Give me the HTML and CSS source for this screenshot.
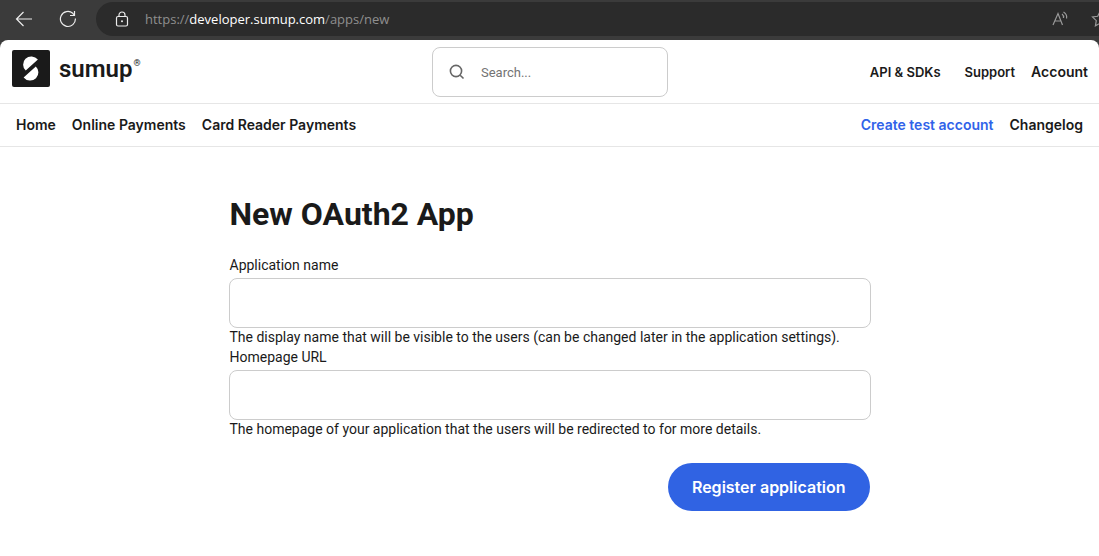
FILE: index.html
```html
<!DOCTYPE html>
<html lang="en">
<head>
<meta charset="utf-8">
<meta name="viewport" content="width=device-width, initial-scale=1">
<title>New OAuth2 App</title>
<link rel="stylesheet" href="styles.css">
</head>
<body>
<div class="browser-bar">
  <button class="tool-button" type="button" aria-label="Back">
    <svg width="18" height="18" viewBox="0 0 18 18"><path d="M17 9H1.5M8.5 2L1.5 9l7 7"/></svg>
  </button>
  <button class="tool-button" type="button" aria-label="Reload">
    <svg width="18" height="18" viewBox="0 0 18 18"><path d="M16.4 8.5a7.5 7.5 0 1 1-2.6-5.2L15.500 5.500M15.500 1v4.500H11"/></svg>
  </button>
  <div class="address-bar">
    <svg class="lock" width="14" height="16" viewBox="0 0 14 16"><rect x="1.500" y="5.500" width="11" height="9.500" rx="1.500"/><path d="M4 5.500V4a3 3 0 0 1 6 0v1.500"/><circle class="dot" cx="7" cy="10.200" r="1"/></svg>
    <span class="url">https://<span class="host">developer.sumup.com</span>/apps/new</span>
    <button class="tool-button dim" type="button" aria-label="Read aloud">
      <svg width="18" height="18" viewBox="0 0 18 18"><path d="M2 15L7 3.500l4.500 11.500M3.700 11h6.300M11 4q2 1.500 1.500 4M12.500 2q4 2.500 3 6.500"/></svg>
    </button>
    <button class="tool-button dim star" type="button" aria-label="Add to favorites">
      <svg width="18" height="18" viewBox="0 0 18 18"><path d="M9 1.500l2.300 4.800 5.200.7-3.800 3.600.9 5.200L9 13.300l-4.600 2.500.9-5.200L1.500 7l5.200-.7z"/></svg>
    </button>
  </div>
</div>
<div class="page">
  <header class="top">
    <a class="logo" href="#" aria-label="SumUp home">
      <svg width="38" height="37" viewBox="0 0 38 37"><rect width="38" height="37" rx="2" fill="#1a1a1a"/><path fill="#fff" d="M13.700 20.400A8 8 0 0 1 13.500 8.800A8.500 8.500 0 0 1 25.900 9.600zM23.800 16.600A8 8 0 0 1 24 28.200A8.500 8.500 0 0 1 11.600 27.400z"/></svg>
      <span class="wordmark">sumup</span><span class="registered">®</span>
    </a>
    <label class="search">
      <svg width="16" height="16" viewBox="0 0 16 16"><circle cx="7" cy="7" r="5.600"/><path d="M11.200 11.200L14.500 14.500"/></svg>
      <input type="search" placeholder="Search..." aria-label="Search">
    </label>
    <nav class="links">
      <a class="medium" href="#">API &amp; SDKs</a>
      <a class="medium" href="#">Support</a>
      <a class="account" href="#">Account</a>
    </nav>
  </header>
  <nav class="subnav">
    <a href="#">Home</a>
    <a href="#">Online Payments</a>
    <a href="#">Card Reader Payments</a>
    <a class="create" href="#">Create test account</a>
    <a href="#">Changelog</a>
  </nav>
  <main class="content">
    <h1>New OAuth2 App</h1>
    <form class="form">
      <label for="app-name">Application name</label>
      <input id="app-name" type="text" aria-describedby="name-help">
      <p id="name-help">The display name that will be visible to the users (can be changed later in the application settings).</p>
      <label for="home-url">Homepage URL</label>
      <input id="home-url" type="url" aria-describedby="url-help">
      <p id="url-help">The homepage of your application that the users will be redirected to for more details.</p>
      <button class="submit" type="button">Register application</button>
    </form>
  </main>
</div>
</body>
</html>
```
FILE: styles.css
```css
* { box-sizing: border-box; }
body {
  margin: 0;
  background: #3b3b3b;
  color: #1a1a1a;
  font: 14px/20px Roboto, sans-serif;
  overflow-x: hidden;
}
a { color: inherit; text-decoration: none; }
button, input { font: inherit; }

.browser-bar {
  display: flex;
  align-items: center;
  gap: 26px;
  height: 40px;
  padding: 0 0 2px 15px;
}
.tool-button {
  display: flex;
  flex: none;
  padding: 0;
  border: 0;
  background: none;
}
.browser-bar svg { flex: none; fill: none; stroke: #ececec; stroke-width: 1.2; }
.browser-bar .dim svg { stroke: #999; }
.browser-bar .dot { fill: #ececec; stroke: none; }
.address-bar {
  display: flex;
  flex: 1;
  align-items: center;
  min-width: 0;
  height: 34px;
  margin-left: -7px;
  padding-left: 19px;
  border-radius: 17px 0 0 17px;
  background: #2b2b2b;
  overflow: hidden;
}
.url {
  flex: 1;
  margin-left: 16px;
  color: #8f8f8f;
  font: 13px/20px "Open Sans", sans-serif;
}
.host { color: #fff; }
.star { margin: 0 -10px 0 22px; }

.page {
  min-height: calc(100vh - 40px);
  border-radius: 8px 8px 0 0;
  background: #fff;
}
.top {
  display: grid;
  grid-template-columns: 1fr 236px 1fr;
  align-items: center;
  height: 64px;
  padding: 0 11px 0 12px;
  border-bottom: 1px solid #e6e6e6;
}
.logo { display: flex; align-items: center; padding-bottom: 6px; }
.wordmark {
  margin-left: 9px;
  font: 600 24px/32px Roboto, sans-serif;
}
.registered { margin-left: 1px; font: 9px/12px Roboto, sans-serif; padding-bottom: 12px; }
.search {
  display: flex;
  align-items: center;
  gap: 16px;
  height: 50px;
  padding: 0 16px;
  border: 1px solid #ccc;
  border-radius: 8px;
}
.search svg { flex: none; fill: none; stroke: #666; stroke-width: 1.6; }
.search input {
  flex: 1;
  min-width: 0;
  padding: 2px 0 0;
  border: 0;
  outline: 0;
  background: none;
  font-size: 13px;
}
.search input::placeholder { color: #737373; }
.links, .subnav, .submit { font-family: Inter, sans-serif; font-weight: 600; }
.links { display: flex; justify-content: flex-end; gap: 24px; }
.medium { font-size: 13px; }
.account { margin-left: -8px; }

.subnav {
  display: flex;
  align-items: center;
  gap: 16px;
  height: 43px;
  padding: 0 16px;
  border-bottom: 1px solid #e6e6e6;
}
.create { margin-left: auto; color: #3063e9; }

.content { max-width: 674px; margin: 0 auto; padding: 47px 16px 45px; }
h1 { margin: 0 0 21px; padding-left: 1px; font: 700 32px/40px Roboto, sans-serif; }
.form { display: flex; flex-direction: column; }
.form label { padding-left: 1px; }
.form input {
  width: 100%;
  height: 50px;
  margin-top: 3px;
  padding: 0 16px;
  border: 1px solid #ccc;
  border-radius: 8px;
  background: #fff;
}
.form p { margin: -1px 0 0; padding-left: 1px; }
.submit {
  align-self: flex-end;
  margin: 24px 1px 0 0;
  padding: 12px 24px;
  border: 0;
  border-radius: 24px;
  background: #3063e3;
  color: #fff;
  font-size: 16px;
  line-height: 24px;
}
```
